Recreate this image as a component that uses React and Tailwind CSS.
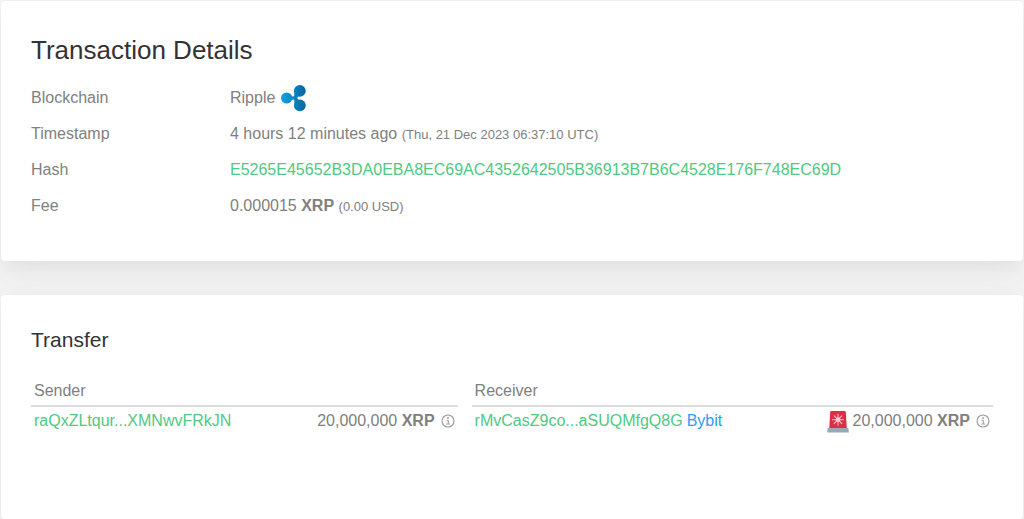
const RippleLogo = () => (
    <svg width="26" height="27" viewBox="0 0 26 27" aria-hidden="true">
        <defs>
            <linearGradient id="ripple" x1="0" y1="0" x2="26" y2="0" gradientUnits="userSpaceOnUse">
                <stop offset="0" stopColor="#12a5df" />
                <stop offset="1" stopColor="#04629c" />
            </linearGradient>
        </defs>
        <g fill="url(#ripple)">
            <circle cx="5.6" cy="13" r="5.6" />
            <circle cx="18.8" cy="5.9" r="5.9" />
            <circle cx="18.8" cy="20.4" r="5.9" />
            <path d="M9.6 9.9 Q10.8 11.7 12.5 11.5 Q14 10.7 13.2 7.4 L18.6 10.6 Q16.6 11.7 16.2 13 Q16.6 14.3 18.6 15.5 L13.2 18.8 Q14 15.3 12.5 14.5 Q10.8 14.3 9.6 16.1 Z" />
        </g>
    </svg>
)

const Siren = () => (
    <svg width="22" height="23" viewBox="0 0 22 23" aria-hidden="true">
        <path d="M2.2 19 L3.2 2.2 Q3.4 1 4.6 1 H17.4 Q18.6 1 18.8 2.2 L19.8 19 Z" fill="#dd2e44" />
        <path d="M11 4.2 V15.2 M5.5 9.7 H16.5 M7.2 5.9 L14.8 13.5 M14.8 5.9 L7.2 13.5" stroke="#f4abba" strokeWidth="1.2" strokeLinecap="round" />
        <circle cx="11" cy="9.7" r="2.4" fill="#f9ccd5" />
        <path d="M1.4 18 H20.6 Q21.4 18 21.5 19 L21.8 22.6 H0.2 L0.5 19 Q0.6 18 1.4 18 Z" fill="#99aab5" />
    </svg>
)

const InfoIcon = () => (
    <svg width="14" height="14" viewBox="0 0 14 14" fill="none" stroke="#9a9a9a" aria-hidden="true">
        <circle cx="7" cy="7" r="6" strokeWidth="1.1" />
        <path d="M5.6 6.3 H7.3 V9.8 M5.3 10 H8.9" strokeWidth="1" />
        <circle cx="7" cy="4" r="0.9" fill="#9a9a9a" stroke="none" />
    </svg>
)

const Card = ({ children, className }) => (
    <section className={`rounded-sm bg-white px-[30px] pt-[33px] pb-[37px] shadow-[0_15px_35px_rgba(50,50,50,0.07),0_5px_15px_rgba(0,0,0,0.03)] ${className ?? ""}`}>
        {children}
    </section>
)

const DetailRow = ({ label, children }) => (
    <div className="flex h-9 items-center">
        <dt className="w-[199px] shrink-0">{label}</dt>
        <dd className="flex items-center">{children}</dd>
    </div>
)

const TransferTable = ({ title, address, owner, alert }) => (
    <table className="w-full border-collapse">
        <thead>
            <tr className="border-b-2 border-[#dddddd]">
                <th colSpan={2} className="px-[3px] pt-1 pb-0.5 text-left font-normal">{title}</th>
            </tr>
        </thead>
        <tbody>
            <tr>
                <td className="px-[3px] py-0.5 whitespace-nowrap">
                    <a href="#address" className="text-[#50c983]">{address}</a>
                    {owner && <a href="#owner" className="ml-1 text-[#2b9df4]">{owner}</a>}
                </td>
                <td className="px-[3px] py-0.5">
                    <div className="flex items-center justify-end whitespace-nowrap">
                        {alert && <span className="mr-1"><Siren /></span>}
                        <span className="mr-1.5">20,000,000 <b>XRP</b></span>
                        <InfoIcon />
                    </div>
                </td>
            </tr>
        </tbody>
    </table>
)

const App = () => {
    return (
        <main className="flex min-h-screen flex-col gap-[34px] overflow-hidden bg-[#f4f4f4] p-px pb-0 font-['Liberation_Sans',Arial,sans-serif] text-base text-[#808080]">
            <Card>
                <h1 className="text-[26px] leading-8 text-[#333333]">Transaction Details</h1>
                <dl className="mt-3.5">
                    <DetailRow label="Blockchain">
                        <span className="mr-1.5">Ripple</span>
                        <RippleLogo />
                    </DetailRow>
                    <DetailRow label="Timestamp">
                        <span>4 hours 12 minutes ago <small className="text-[13px]">(Thu, 21 Dec 2023 06:37:10 UTC)</small></span>
                    </DetailRow>
                    <DetailRow label="Hash">
                        <a href="#hash" className="text-[#50c983]">E5265E45652B3DA0EBA8EC69AC4352642505B36913B7B6C4528E176F748EC69D</a>
                    </DetailRow>
                    <DetailRow label="Fee">
                        <span>0.000015 <b>XRP</b> <small className="text-[13px]">(0.00 USD)</small></span>
                    </DetailRow>
                </dl>
            </Card>

            <Card className="grow">
                <h2 className="text-[21px] leading-6 text-[#333333]">Transfer</h2>
                <div className="mt-[23px] grid grid-cols-[9fr_11fr] gap-3.5">
                    <TransferTable title="Sender" address="raQxZLtqur...XMNwvFRkJN" />
                    <TransferTable title="Receiver" address="rMvCasZ9co...aSUQMfgQ8G" owner="Bybit" alert />
                </div>
            </Card>
        </main>
    )
}
export default App;
